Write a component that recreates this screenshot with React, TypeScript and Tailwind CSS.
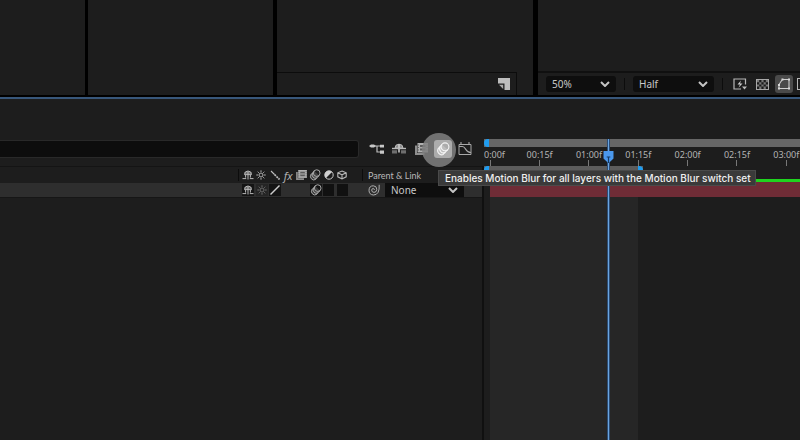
import React from 'react';

const TICKS = ['00:15f', '01:00f', '01:15f', '02:00f', '02:15f', '03:00f'];

type IconProps = { className?: string };

const Chevron = () => (
    <svg viewBox="0 0 10 6" className="pointer-events-none absolute right-[6px] top-1/2 h-[6px] w-[10px] -translate-y-1/2" fill="none" stroke="#c4c4c4" strokeWidth="2">
        <path d="M1 1 L5 5 L9 1" />
    </svg>
);

const PageIcon = () => (
    <svg viewBox="0 0 12 12" className="h-3 w-3">
        <path d="M0 0 H12 V12 H6.5 V5.5 H0 Z" fill="#bdbdbd" />
        <path d="M1 6.8 H5.2 V11 Z" fill="#a9a9a9" />
    </svg>
);

const FlashIcon = () => (
    <svg viewBox="0 0 14 12" className="h-3 w-[14px]" fill="none" stroke="#b8b8b8">
        <path d="M8 11 H1 V1 H12.5 V6.5" strokeWidth="1.2" />
        <path d="M8 2.5 L4.5 6.5 H7 L5.5 9.8 L9.5 5.5 H7 Z" fill="#cfcfcf" stroke="none" />
        <path d="M9 8.5 H14 L11.5 11.5 Z" fill="#b8b8b8" stroke="none" />
    </svg>
);

const CheckerIcon = () => (
    <svg viewBox="0 0 13 11" className="h-[11px] w-[13px]">
        <rect x=".5" y=".5" width="12" height="10" fill="#1b1b1b" stroke="#a8a8a8" />
        <path d="M1 1h2.2v2.2H1zM5.4 1h2.2v2.2H5.4zM9.8 1H12v2.2H9.8zM3.2 3.2h2.2v2.2H3.2zM7.6 3.2h2.2v2.2H7.6zM1 5.4h2.2v2.2H1zM5.4 5.4h2.2v2.2H5.4zM9.8 5.4H12v2.2H9.8zM3.2 7.6h2.2V10H3.2zM7.6 7.6h2.2V10H7.6z" fill="#777" />
    </svg>
);

const MaskIcon = () => (
    <svg viewBox="0 0 14 12" className="h-3 w-[14px]" fill="none" stroke="#cfcfcf">
        <path d="M2 10.5 V7 Q3 4.5 5.5 1.5 H12 V10.5 Z" strokeWidth="1.1" />
        <path d="M1 9.5h2v2H1zM1 6h2v2H1zM4.5 .5h2v2h-2zM11 .5h2v2h-2zM11 9.5h2v2h-2z" fill="#d8d8d8" stroke="none" />
    </svg>
);

const FlowchartIcon = () => (
    <svg viewBox="0 0 16 12" className="h-3 w-4">
        <path d="M4 3 H15 M8 3 V9 H12" fill="none" stroke="#bdbdbd" strokeWidth="1.2" />
        <path d="M0 3 L2 1.5 H5 L7 3 L5 4.5 H2 Z M11 1.7h4v2.8h-4z M11 7.5 h4 v3.2 h-4z" fill="#c8c8c8" />
    </svg>
);

const ShyIcon = ({ className = '' }: IconProps) => (
    <svg viewBox="0 0 12 10" className={className} fill="none" stroke="#b8b8b8">
        <path d="M2.5 4.6 Q2.5 1 6 1 Q9.5 1 9.5 4.6 Z M2.5 3 H9.5" />
        <path d="M6 1 V9.5 M3.6 5 V7.6 M8.4 5 V7.6 M.5 8.6 H4.2 M7.8 8.6 H11.5" />
    </svg>
);

const HideShyIcon = () => (
    <svg viewBox="0 0 14 12" className="h-3 w-[14px]">
        <path d="M3 5.2 Q3 1.2 7 1.2 Q11 1.2 11 5.2 Z" fill="#8a8a8a" stroke="#bdbdbd" />
        <path d="M7 1.2 V9.5" stroke="#d0d0d0" strokeWidth="1.5" />
        <path d="M0 4.8 H14 V6.2 H0Z" fill="#b8b8b8" />
        <path d="M0 7.2 H5 V10.5 H0Z M9 7.2 H14 V10.5 H9Z" fill="#6e6e6e" />
    </svg>
);

const FrameBlendIcon = ({ className = '' }: IconProps) => (
    <svg viewBox="0 0 13 12" className={className}>
        <path d="M0 2.5 H2 V10 H9.5 V12 H0 Z" fill="#8e8e8e" />
        <path d="M2.5 0 H13 V9.5 H2.5 Z" fill="#b0b0b0" />
        <path d="M5 2 H10.5 V7.5 H5 Z" fill="#5c5c5c" />
        <path d="M5 4.2 H10.5 V5.4 H5 Z" fill="#b8b8b8" />
        <path d="M3.3 1.5v1M3.3 4v1M3.3 6.5v1M12 1.5v1M12 4v1M12 6.5v1" stroke="#555" />
    </svg>
);

const MotionBlurIcon = ({ className = '' }: IconProps) => (
    <svg viewBox="0 0 14 14" className={className} fill="none" stroke="currentColor" strokeWidth="1.1">
        <path d="M6 2.4 L2 6.9 Q.8 10 3.8 12.2 Q6 13 7.2 12.2 L11.8 7.7 Z" fill="currentColor" fillOpacity=".25" stroke="none" />
        <circle cx="9" cy="4.8" r="3.9" />
        <path d="M4.3 4.7 A4 4 0 0 0 9.5 10.4" />
        <path d="M2.4 6.5 A4 4 0 0 0 7.7 12.2" />
        <path d="M6 2.4 L2 6.9 M11.8 7.7 L7.2 12.2" />
    </svg>
);

const GraphIcon = () => (
    <svg viewBox="0 0 14 14" className="h-[14px] w-[14px]" fill="none" stroke="#a8a8a8">
        <path d="M1 2.5 H13 V12.5 H1 Z" />
        <path d="M1 4.5 H4.5 C8 4.5 7 10.5 13 10.5 M3 0 V2.5 M11 0 V2.5" strokeWidth="1.1" />
    </svg>
);

const SunIcon = ({ className = '' }: IconProps) => (
    <svg viewBox="0 0 10 10" className={className} fill="none" stroke="currentColor">
        <circle cx="5" cy="5" r="2" />
        <path d="M5 .3 V2 M5 8 V9.7 M.3 5 H2 M8 5 H9.7 M1.7 1.7 L2.8 2.8 M7.2 7.2 L8.3 8.3 M8.3 1.7 L7.2 2.8 M2.8 7.2 L1.7 8.3" />
    </svg>
);

const QualityHeadIcon = () => (
    <svg viewBox="0 0 10 10" className="h-[10px] w-[10px]" stroke="#c0c0c0">
        <path d="M1 1 L4.5 4.5" strokeWidth="1.1" />
        <path d="M4.5 4.5 L9.5 9.5" strokeWidth="1.7" strokeDasharray="2 .8" />
    </svg>
);

const QualityIcon = () => (
    <svg viewBox="0 0 10 10" className="h-[10px] w-[10px]" stroke="#cdcdcd" strokeWidth="1.4">
        <path d="M.5 9.5 L9.5 .5" />
    </svg>
);

const AdjustmentIcon = () => (
    <svg viewBox="0 0 10 10" className="h-[10px] w-[10px]">
        <circle cx="5" cy="5" r="4.2" fill="none" stroke="#c8c8c8" />
        <path d="M8 2 A4.2 4.2 0 0 0 2 8 Z" fill="#d0d0d0" />
    </svg>
);

const CubeIcon = () => (
    <svg viewBox="0 0 10 10" className="h-[10px] w-[10px]" fill="none" stroke="#b8b8b8" strokeWidth="1.1">
        <path d="M5 1 L9.2 2.8 V6.8 L5 9 L.8 6.8 V2.8 Z M.8 2.8 L5 4.8 L9.2 2.8 M5 4.8 V9" />
    </svg>
);

const PickWhipIcon = () => (
    <svg viewBox="0 0 12 12" className="h-3 w-3" fill="none" stroke="#b0b0b0">
        <path d="M11.2 .8 Q11.8 10.8 5.6 11 Q1 10.8 1 6.2 Q1.2 1.8 5.3 1.8 Q8.8 2 8.8 5.3 Q8.6 8.4 6 8.4 Q3.6 8.2 3.7 6 Q4 4.3 5.4 4.4 Q6.6 4.7 6.2 6" />
    </svg>
);

const IconButton = ({ label, className = '', children }: { label: string; className?: string; children?: React.ReactNode }) => (
    <button type="button" aria-label={label} className={`flex shrink-0 items-center justify-center ${className}`}>
        {children}
    </button>
);

const Dropdown = ({ label, options, className = '' }: { label: string; options: string[]; className?: string }) => (
    <div className={`relative shrink-0 bg-[#0e0e0e] ${className}`}>
        <select aria-label={label} className="block h-full w-full appearance-none bg-transparent pl-[6px] leading-none text-[#c8c8c8] outline-none">
            {options.map(o => <option key={o}>{o}</option>)}
        </select>
        <Chevron />
    </div>
);

const ViewerPanels = () => (
    <div className="flex h-[97px] gap-[3px] bg-black pb-[2px]">
        <div className="w-[85px] shrink-0 bg-[#1d1d1d]" />
        <div className="w-[185px] shrink-0 bg-[#1d1d1d]" />
        <div className="ml-px flex w-[256px] shrink-0 flex-col bg-[#1d1d1d]">
            <div className="flex-1" />
            <div className="mr-4 flex h-[23px] items-center justify-end border-r border-t border-[#0c0c0c] pr-[6px]">
                <IconButton label="New item"><PageIcon /></IconButton>
            </div>
        </div>
        <div className="ml-[2px] flex min-w-0 flex-1 flex-col overflow-hidden bg-[#1d1d1d]">
            <div className="flex-1" />
            <div className="flex h-6 items-center border-t-2 border-[#101010] pl-2 text-[10px]">
                <Dropdown label="Magnification" options={['50%', '100%']} className="h-4 w-[70px] rounded-[3px]" />
                <div className="mx-2 h-3 w-px shrink-0 bg-[#0c0c0c]" />
                <Dropdown label="Resolution" options={['Half', 'Full']} className="h-4 w-[81px] rounded-[3px]" />
                <div className="mx-2 h-3 w-px shrink-0 bg-[#0c0c0c]" />
                <div className="flex shrink-0 items-center gap-1">
                    <IconButton label="Fast previews" className="h-[18px] w-[18px]"><FlashIcon /></IconButton>
                    <IconButton label="Transparency grid" className="h-[18px] w-[18px]"><CheckerIcon /></IconButton>
                    <IconButton label="Mask visibility" className="h-[18px] w-[18px] rounded-[3px] bg-[#4a4a4a]"><MaskIcon /></IconButton>
                    <IconButton label="Region of interest" className="h-3 w-3 border border-[#b8b8b8]" />
                </div>
            </div>
        </div>
    </div>
);

const LayerPanel = () => (
    <div className="flex w-[484px] shrink-0 flex-col">
        <div className="mb-2 mt-[41px] flex h-[18px] items-center">
            <input aria-label="Search layers" className="h-[18px] w-[359px] rounded-r-[3px] border border-l-0 border-[#292929] bg-[#0d0d0d] outline-none" />
            <div className="ml-[9px] flex items-center gap-1">
                <IconButton label="Mini flowchart" className="w-[18px]"><FlowchartIcon /></IconButton>
                <IconButton label="Hide shy layers" className="w-[18px]"><HideShyIcon /></IconButton>
                <IconButton label="Frame blending" className="w-[18px]"><FrameBlendIcon className="h-3 w-[13px]" /></IconButton>
                {/* motion blur toggle with the click highlight behind it */}
                <div className="relative">
                    <div className="absolute -left-[12px] -top-[7px] h-[34px] w-[34px] rounded-full bg-[#808080]/85" />
                    <IconButton label="Motion blur" className="relative h-[18px] w-[18px] rounded-[3px] bg-[#acacac] text-[#f4f4f4]">
                        <MotionBlurIcon className="h-[14px] w-[14px]" />
                    </IconButton>
                </div>
                <IconButton label="Graph editor" className="w-[18px]"><GraphIcon /></IconButton>
            </div>
        </div>

        <div className="flex flex-1 flex-col border-r-2 border-[#101010]">
            <div className="flex h-[17px] items-center border-t border-[#141414]">
                <div className="ml-[238px] mr-[2px] h-3 w-px bg-[#0c0c0c]" />
                <div className="grid w-[108px] grid-cols-8 items-center justify-items-center text-[#b0b0b0]">
                    <ShyIcon className="h-[10px] w-3" />
                    <SunIcon className="h-[10px] w-[10px]" />
                    <QualityHeadIcon />
                    <span className="font-['Noto_Sans',sans-serif] text-[11px] italic leading-none">fx</span>
                    <FrameBlendIcon className="h-[10px] w-[11px]" />
                    <MotionBlurIcon className="h-3 w-3" />
                    <AdjustmentIcon />
                    <CubeIcon />
                </div>
                <div className="ml-[13px] mr-[5px] h-3 w-px bg-[#0c0c0c]" />
                <span className="font-['Lato',sans-serif] text-[9px] leading-none text-[#b8b8b8]">Parent &amp; Link</span>
            </div>

            <div className="flex h-[14px] items-center bg-[#2e2e2e]">
                <div className="ml-[242px] grid w-[108px] grid-cols-8 items-center">
                    <IconButton label="Shy" className="h-3 w-3 bg-[#141414]"><ShyIcon className="h-[10px] w-3" /></IconButton>
                    <IconButton label="Collapse" className="h-3 w-3 bg-[#252525] text-[#6c6c6c]"><SunIcon className="h-[10px] w-[10px]" /></IconButton>
                    <IconButton label="Quality" className="h-3 w-3 bg-[#141414]"><QualityIcon /></IconButton>
                    <span />
                    <span />
                    <IconButton label="Layer motion blur" className="h-3 w-3 bg-[#141414] text-[#b0b0b0]"><MotionBlurIcon className="h-3 w-3" /></IconButton>
                    <IconButton label="Adjustment layer" className="h-3 w-[11px] bg-[#111111]" />
                    <IconButton label="3D layer" className="h-3 w-[11px] bg-[#111111]" />
                </div>
                <IconButton label="Pick whip" className="ml-[18px] mr-[5px]"><PickWhipIcon /></IconButton>
                <Dropdown label="Parent" options={['None']} className="h-[14px] w-[79px] text-[10px]" />
            </div>
            <div className="flex-1 border-t border-[#161616]" />
        </div>
    </div>
);

const Timeline = () => (
    <div className="relative flex min-w-0 flex-1 flex-col overflow-hidden">
        <div className="mt-10 flex h-2 bg-[#666666]">
            <div className="w-[5px] rounded-l-full bg-[#1f9cf0]" />
        </div>
        <div className="flex h-[19px] text-[9px] leading-[10px] text-[#b4b4b4]">
            <div className="flex w-[31px] shrink-0 flex-col">
                <span className="mt-[3px]">0:00f</span>
                <div className="ml-[6px] w-px flex-1 bg-[#777777]" />
            </div>
            <div className="grid w-[296px] shrink-0 grid-cols-6">
                {TICKS.map(t => (
                    <div key={t} className="flex flex-col items-center">
                        <span className="mt-[3px]">{t}</span>
                        <div className="w-px flex-1 bg-[#777777]" />
                    </div>
                ))}
            </div>
        </div>
        <div className="flex h-1 w-[159px] justify-between bg-[#5c5c5c]">
            <div className="w-[5px] rounded-tl-full bg-[#1f9cf0]" />
            <div className="w-[5px] rounded-tr-full bg-[#1f9cf0]" />
        </div>
        <div className="ml-[6px] mt-[9px] h-[3px] bg-[#1fd41f]" />
        <div className="ml-[6px] h-[15px] bg-[#6f2c36]" />
        <div className="ml-[6px] w-[148px] flex-1 bg-[#262626]" />

        {/* playhead */}
        <div className="absolute bottom-0 left-[123px] top-10 w-[3px] border-x border-[#2c4c74] bg-[#6aa5e0]" />
        <svg viewBox="0 0 10 12" className="absolute left-[119px] top-[52px] h-3 w-[11px]">
            <path d="M0 0 H10 V7.5 L5.8 11.5 H4.2 L0 7.5 Z" fill="#4b98ec" />
            <path d="M5 12 V6 M3.2 6 H6.8" stroke="#173a63" strokeWidth="1.2" />
        </svg>
    </div>
);

export default function App() {
    return (
        <div className="flex min-h-screen flex-col overflow-hidden bg-[#1d1d1d] font-['Noto_Sans',sans-serif]">
            <ViewerPanels />
            <div className="relative flex flex-1 border-t-2 border-[#38577b]">
                <LayerPanel />
                <Timeline />
                <div role="tooltip" className="absolute left-[438px] top-[71px] flex h-4 items-center whitespace-nowrap border border-[#4a4a4a] bg-[#3a3a3a] pl-[6px] pr-1 font-['Inter',sans-serif] text-[10px] font-medium leading-none text-[#f0f0f0]">
                    Enables Motion Blur for all layers with the Motion Blur switch set
                </div>
            </div>
        </div>
    );
}
